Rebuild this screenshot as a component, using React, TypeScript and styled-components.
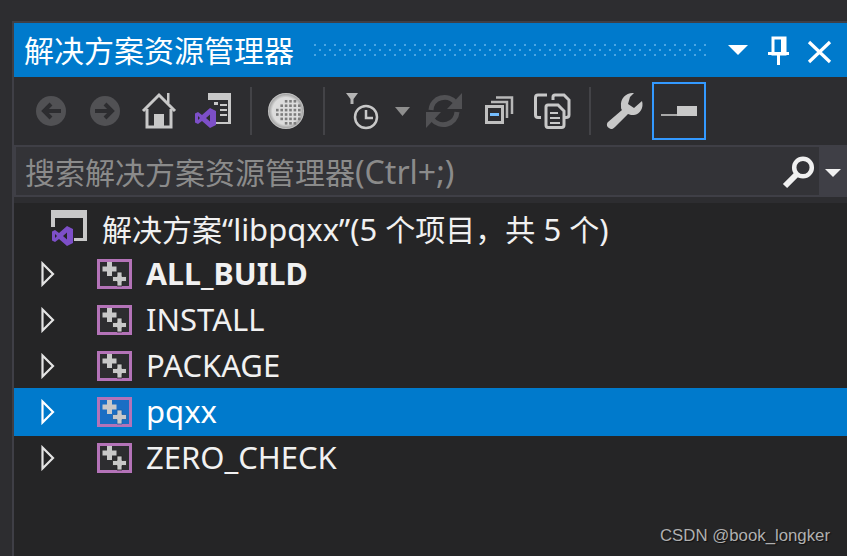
import React from "react";
import styled, { createGlobalStyle } from "styled-components";

const Global = createGlobalStyle`
  html, body { margin: 0; padding: 0; background: #2d2d30; overflow: hidden; }
  #root { height: 556px; }
`;

const Page = styled.div`
  position: relative;
  width: 847px;
  height: 556px;
  padding: 21px 0 0 12px;
  box-sizing: border-box;
  background: #2d2d30;
  overflow: hidden;
  font-family: "Noto Sans", "Noto Sans CJK SC", sans-serif;
`;
const Panel = styled.div`
  height: 535px;
  border-top: 2px solid #3f3f46;
  border-left: 2px solid #3f3f46;
  display: flex;
  flex-direction: column;
`;
const TitleBar = styled.header`
  height: 54px;
  flex: none;
  background: #007acc;
  display: flex;
  align-items: center;
  color: #fff;
  padding-left: 10px;
`;
const TitleText = styled.span`
  font-size: 30px;
  line-height: 54px;
  white-space: nowrap;
  font-family: "Noto Sans CJK SC", sans-serif;
  position: relative;
  top: -1px;
`;
const Grip = styled.div`
  flex: none;
  width: 394px;
  height: 12px;
  margin-left: 20px;
  background-image:
    radial-gradient(circle at 1px 1px, #4ca6e2 1px, transparent 1.3px),
    radial-gradient(circle at 1px 1px, #4ca6e2 1px, transparent 1.3px);
  background-size: 10px 10px;
  background-position: 0 0, 5px 5px;
`;
const TitleIcons = styled.svg`
  flex: none;
  width: 139px;
  height: 54px;
  display: block;
`;
const Toolbar = styled.div`
  height: 68px;
  flex: none;
  display: flex;
  align-items: center;
  padding-left: 10px;
  background: #2d2d30;
`;
const ToolButton = styled.div<{ $w?: number; $on?: boolean }>`
  flex: none;
  width: ${(p) => p.$w ?? 54}px;
  height: 58px;
  box-sizing: border-box;
  border: 2px solid ${(p) => (p.$on ? "#3399ff" : "transparent")};
  svg { display: block; margin: -2px; }
`;
const Sep = styled.div<{ $r?: number }>`
  flex: none;
  width: 2px;
  height: 48px;
  margin: 0 ${(p) => p.$r ?? 7}px 0 10px;
  background: #434347;
`;
const Search = styled.div`
  height: 52px;
  flex: none;
  box-sizing: border-box;
  border: 2px solid #3f3f46;
  border-right: 0;
  background: #333337;
  display: flex;
  align-items: center;
  color: #8b8b8b;
`;
const SearchText = styled.span`
  flex: 1;
  padding-left: 9px;
  font-size: 30px;
  line-height: 48px;
  white-space: nowrap;
  position: relative;
  top: 1px;
`;
const SearchLatin = styled.span`
  font-size: 32px;
`;
const SearchIcon = styled.svg`
  flex: none;
  width: 40px;
  height: 48px;
  display: block;
`;
const SearchDrop = styled.div`
  flex: none;
  width: 28px;
  height: 50px;
  margin-top: -2px;
  background: #3f3f46;
  display: flex;
  align-items: center;
  justify-content: center;
  svg { display: block; margin-top: 6px; }
`;
const Gap = styled.div`
  height: 6px;
  flex: none;
  background: #2d2d30;
`;
const Tree = styled.div`
  flex: 1;
  background: #252526;
  color: #f1f1f1;
  padding-top: 2px;
`;
const SolutionRow = styled.div`
  height: 46px;
  display: flex;
  align-items: center;
  padding-left: 37px;
  font-size: 30px;
  white-space: nowrap;
  svg { flex: none; display: block; margin-right: 15px; }
`;
const Wide = styled.span`
  font-size: 31px;
`;
const Row = styled.div<{ $sel?: boolean }>`
  height: ${(p) => (p.$sel ? 48 : 46)}px;
  margin: ${(p) => (p.$sel ? "-1px 0" : "0")};
  background: ${(p) => (p.$sel ? "#007acc" : "transparent")};
  color: ${(p) => (p.$sel ? "#fff" : "#f1f1f1")};
  display: flex;
  align-items: center;
  padding-left: 27px;
  white-space: nowrap;
`;
const Label = styled.span<{ $bold?: boolean }>`
  font-size: ${(p) => (p.$bold ? 30.4 : 31)}px;
  font-weight: ${(p) => (p.$bold ? 700 : 400)};
  margin-left: 14px;
  position: relative;
  top: -1px;
`;
const Watermark = styled.div`
  position: absolute;
  left: 660px;
  top: 527px;
  font-family: "Liberation Sans", sans-serif;
  font-size: 16.8px;
  line-height: 18px;
  color: #b0b0b0;
  text-shadow: 1px 1px 1px #111;
  white-space: nowrap;
`;

const GRAY = "#c8c8c8";
const DIM = "#515154";

const Page54 = ({ x, w = 54, children }: { x: number; w?: number; children: React.ReactNode }) => (
  <svg width={w} height={58} viewBox={`${x} 82 ${w} 58`}>{children}</svg>
);

const VS = ({ x, y }: { x: number; y: number }) => (
  <g transform={`translate(${x} ${y})`}>
    <path
      fillRule="evenodd"
      fill="#7d4fc8"
      d="M15 0 21 3V17L15 20 7 13 3 16 0 14.5V5.5L3 4 7 7ZM3 8V12L5 10ZM15 6.500 11 10 15 13.500Z"
    />
  </g>
);

const Back = () => (
  <Page54 x={24}>
    <circle cx={51} cy={111} r={15} fill={DIM} />
    <path d="M61 111H45M51 104l-7 7 7 7" fill="none" stroke="#2d2d30" strokeWidth={4} />
  </Page54>
);
const Forward = () => (
  <Page54 x={78}>
    <circle cx={105} cy={111} r={15} fill={DIM} />
    <path d="M95 111H111M105 104l7 7-7 7" fill="none" stroke="#2d2d30" strokeWidth={4} />
  </Page54>
);
const Home = () => (
  <Page54 x={132}>
    <path d="M143 111 159 95 175 111" fill="none" stroke={GRAY} strokeWidth={3} />
    <path d="M147 109V127H171V109" fill="none" stroke={GRAY} strokeWidth={3} />
    <rect x={154} y={114} width={10} height={13} fill={GRAY} />
    <rect x={167} y={93} width={2.5} height={10} fill={GRAY} />
  </Page54>
);
const VsDoc = () => (
  <Page54 x={186}>
    <path d="M208 93H231V124H216V122H228V100H208Z" fill={GRAY} />
    <path d="M214 102h4v3h-4zM220 104h7v2h-7zM220 109h7v2h-7zM220 114h7v2h-7z" fill={GRAY} />
    <VS x={195} y={108} />
  </Page54>
);
const Globe = () => {
  const dots: React.ReactNode[] = [];
  for (let r = 0; r < 6; r++)
    for (let c = 0; c < 6; c++) {
      const cx = 276 + c * 4.4;
      const cy = 100 + r * 4.4;
      if (Math.hypot(cx - 288, cy - 111) < 13)
        dots.push(<rect key={`${r}-${c}`} x={cx} y={cy} width={2.6} height={2.6} fill="#7c7c7c" />);
    }
  return (
    <Page54 x={259}>
      <defs>
        <radialGradient id="gl">
          <stop offset="0.75" stopColor="#dcdcdc" />
          <stop offset="0.92" stopColor="#a8a8a8" />
          <stop offset="1" stopColor="#d0d0d0" />
        </radialGradient>
      </defs>
      <circle cx={286} cy={111} r={18} fill="url(#gl)" />
      {dots}
    </Page54>
  );
};
const ClockFilter = () => (
  <Page54 x={332} w={85}>
    <path d="M346 93H358L353.500 99V104H350.500V99Z" fill="#b4b4b4" />
    <circle cx={366} cy={117} r={11} fill="none" stroke={GRAY} strokeWidth={2.5} />
    <path d="M366 110V118H373" fill="none" stroke={GRAY} strokeWidth={2.5} />
    <path d="M395 107H410L402.500 116Z" fill="#8e8e8e" />
  </Page54>
);
const Sync = () => (
  <Page54 x={417}>
    <path d="M431 110C432 97 448 93 456 103" fill="none" stroke={DIM} strokeWidth={5} />
    <path d="M462 93V109H447Z" fill={DIM} />
    <path d="M457 112C456 125 440 129 432 119" fill="none" stroke={DIM} strokeWidth={5} />
    <path d="M426 128V112H441Z" fill={DIM} />
  </Page54>
);
const Collapse = () => (
  <Page54 x={471}>
    <path d="M496 97.500H512V114" fill="none" stroke="#b8b8b8" strokeWidth={2.500} />
    <path d="M491 102H507V118" fill="none" stroke="#b8b8b8" strokeWidth={2.500} />
    <rect x={486.500} y={106.500} width={16} height={16} fill="#2d2d30" stroke="#c0c0c0" strokeWidth={3} />
    <rect x={490} y={113} width={9} height={3} fill="#75beff" />
  </Page54>
);
const Copy = () => (
  <Page54 x={525}>
    <path d="M547 95H538Q535.500 95 535.500 97.500V115Q535.500 117.500 538 117.500H541" fill="none" stroke={GRAY} strokeWidth={3} />
    <path d="M553 100V97Q553 95 555 95H564L569 100V115Q569 117.500 566 117.500H563" fill="none" stroke={GRAY} strokeWidth={3} />
    <path d="M546 107Q546 105 548 105H558L564 111V125Q564 127.500 561.500 127.500H548Q546 127.500 546 125Z" fill="#2d2d30" stroke={GRAY} strokeWidth={3} />
    <path d="M550 112h8v2h-8zM550 117h10v2h-10zM550 122h10v2h-10z" fill={GRAY} />
  </Page54>
);
const Wrench = () => (
  <Page54 x={598}>
    <path
      fill={GRAY}
      d="M634 93C627 92 620 98 621 106C621 108 621 109 622 110L608 122C606 124 607 127 609 128C611 130 613 129 615 127L628 114C630 115 632 115 634 115C640 114 644 108 642 101L634 108L628 104L630 97L634 93Z"
    />
  </Page54>
);
const Pane = () => (
  <Page54 x={652}>
    <rect x={661} y={114} width={17} height={2} fill="#a8a8a8" />
    <rect x={677} y={106} width={20} height={10} fill={GRAY} />
  </Page54>
);

const Expander = ({ sel }: { sel?: boolean }) => (
  <svg width={14} height={26} viewBox="0 0 14 26" style={{ flex: "none", display: "block" }}>
    <path d="M1.500 2.500V23.500L12 13Z" fill="none" stroke={sel ? "#fff" : "#e4e4e4"} strokeWidth={2.200} />
  </svg>
);

const ProjectSvg = styled.svg`
  flex: none;
  display: block;
  margin-left: 42px;
`;
const Project = ({ sel }: { sel?: boolean }) => (
  <ProjectSvg width={35} height={30} viewBox="0 0 35 30">
    <rect x={1.500} y={1.500} width={32} height={27} fill={sel ? "#1a6ec4" : "#2d2d30"} stroke="#b473b8" strokeWidth={3} />
    <path d="M10 3h5v4.500h4.500v5H15v4.500h-5v-4.500H5.500v-5H10z" fill={GRAY} />
    <path d="M20 13h5v4.500h4.500v5H25v4.500h-5v-4.500h-4.500v-5H20z" fill={GRAY} stroke={sel ? "#1a5fa8" : "#222"} strokeWidth={0.8} />
  </ProjectSvg>
);

const projects = [
  { name: "ALL_BUILD", bold: true },
  { name: "INSTALL" },
  { name: "PACKAGE" },
  { name: "pqxx", sel: true },
  { name: "ZERO_CHECK" },
];

export default function App() {
  return (
    <Page>
      <Global />
      <Panel>
        <TitleBar>
          <TitleText>解决方案资源管理器</TitleText>
          <Grip />
          <TitleIcons viewBox="708 23 139 54">
            <path d="M728 45H748L738 55Z" fill="#fff" />
            <path d="M773 38H785V54H773Z" fill="none" stroke="#fff" strokeWidth={3} />
            <rect x={781} y={38} width={4} height={16} fill="#fff" />
            <rect x={768} y={52} width={21} height={3} fill="#fff" />
            <rect x={777} y={54} width={3} height={11} fill="#fff" />
            <path d="M809 42L830 62M830 42L809 62" stroke="#fff" strokeWidth={3.200} fill="none" />
          </TitleIcons>
        </TitleBar>
        <Toolbar>
          <ToolButton><Back /></ToolButton>
          <ToolButton><Forward /></ToolButton>
          <ToolButton><Home /></ToolButton>
          <ToolButton><VsDoc /></ToolButton>
          <Sep />
          <ToolButton><Globe /></ToolButton>
          <Sep />
          <ToolButton $w={85}><ClockFilter /></ToolButton>
          <ToolButton><Sync /></ToolButton>
          <ToolButton><Collapse /></ToolButton>
          <ToolButton><Copy /></ToolButton>
          <Sep />
          <ToolButton><Wrench /></ToolButton>
          <ToolButton $on><Pane /></ToolButton>
        </Toolbar>
        <Search>
          <SearchText>搜索解决方案资源管理器<SearchLatin>(Ctrl+;)</SearchLatin></SearchText>
          <SearchIcon viewBox="777 147 40 48">
            <circle cx={801} cy={167.500} r={8.800} fill="none" stroke="#f0f0f0" strokeWidth={4.500} />
            <path d="M794 175L783 186" stroke="#f0f0f0" strokeWidth={6} fill="none" />
          </SearchIcon>
          <SearchDrop>
            <svg width={16} height={8} viewBox="0 0 16 8"><path d="M0 0H16L8 8Z" fill="#f0f0f0" /></svg>
          </SearchDrop>
        </Search>
        <Gap />
        <Tree>
          <SolutionRow>
            <svg width={36} height={36} viewBox="51 211 36 36">
              <path d="M51 211H87V242H74V239H83V219H55V228H51Z" fill={GRAY} />
              <VS x={52} y={227} />
            </svg>
            <span>解决方案<Wide>“libpqxx”(5 </Wide>个项目，共<Wide> 5 </Wide>个<Wide>)</Wide></span>
          </SolutionRow>
          {projects.map((p) => (
            <Row key={p.name} $sel={p.sel}>
              <Expander sel={p.sel} />
              <Project sel={p.sel} />
              <Label $bold={p.bold}>{p.name}</Label>
            </Row>
          ))}
        </Tree>
      </Panel>
      <Watermark>CSDN @book_longker</Watermark>
    </Page>
  );
}
